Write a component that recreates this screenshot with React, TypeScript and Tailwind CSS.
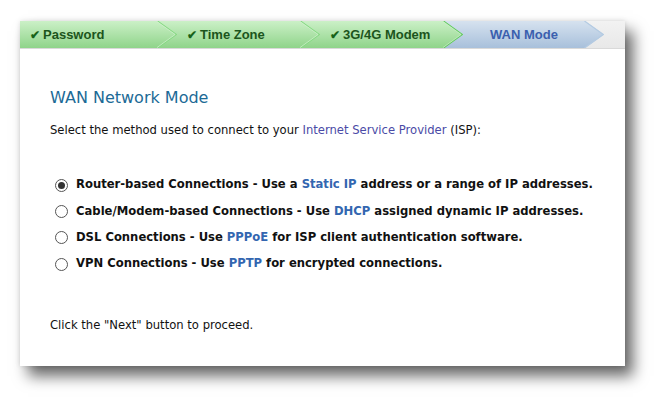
import React from 'react'

type Step = {
	label: string
	done: boolean
	width: string
	pad: string
	z: string
	line: string
}

const steps: Step[] = [
	{ label: 'Password', done: true, width: 'w-[157px]', pad: 'pl-[10px]', z: 'z-40', line: '#86d983' },
	{ label: 'Time Zone', done: true, width: 'w-[162px]', pad: 'pl-[29px]', z: 'z-30', line: '#86d983' },
	{ label: '3G/4G Modem', done: true, width: 'w-[162px]', pad: 'pl-[29px]', z: 'z-20', line: '#62c95f' },
	{ label: 'WAN Mode', done: false, width: 'w-[160px]', pad: 'pl-[19px]', z: 'z-10', line: '#b4cbe2' },
]

function StepItem({ step, first }: { step: Step; first: boolean }) {
	return (
		<div className={`relative h-[27px] shrink-0 ${step.width} ${step.z} ${first ? '' : '-ml-[19px]'}`}>
			<div
				className={`absolute inset-0 [clip-path:polygon(0_0,calc(100%-19px)_0,100%_50%,calc(100%-19px)_100%,0_100%)] ${
					step.done
						? 'bg-gradient-to-b from-[#cbf0c7] to-[#8fd48a]'
						: 'bg-gradient-to-b from-[#d6e2ef] to-[#a8c0db]'
				}`}
			/>
			<svg className="absolute right-0 top-0 h-[27px] w-[20px]" viewBox="0 0 20 27" fill="none">
				<polyline points="0.5,0 19.3,13.5 0.5,27" stroke={step.line} strokeWidth="1.2" />
				{step.done && <polyline points="-0.6,0 18.2,13.5 -0.6,27" stroke="#e6f7e4" strokeWidth="0.8" opacity="0.7" />}
			</svg>
			<div
				className={`relative flex h-full items-center font-['Liberation_Sans',Arial,sans-serif] text-[13px] font-bold ${
					step.done ? `${step.pad} text-[#1c551c]` : `justify-center ${step.pad} pr-[19px] text-[#3b5fae]`
				}`}
			>
				{step.done && <span className="mr-[3px] text-[12px] leading-none text-[#17621a]">✔</span>}
				{step.label}
			</div>
		</div>
	)
}

function Radio({ checked }: { checked?: boolean }) {
	return (
		<span className="mr-[8px] flex h-[13px] w-[13px] shrink-0 items-center justify-center rounded-full border border-[#555] bg-white">
			{checked && <span className="h-[7px] w-[7px] rounded-full bg-[#333]" />}
		</span>
	)
}

const B = ({ children }: { children: React.ReactNode }) => <span className="text-[#3366b0]">{children}</span>

export default function App() {
	const options = [
		{
			checked: true,
			body: (
				<>
					Router-based Connections - Use a <B>Static IP</B> address or a range of IP addresses.
				</>
			),
		},
		{
			body: (
				<>
					Cable/Modem-based Connections - Use <B>DHCP</B> assigned dynamic IP addresses.
				</>
			),
		},
		{
			body: (
				<>
					DSL Connections - Use <B>PPPoE</B> for ISP client authentication software.
				</>
			),
		},
		{
			body: (
				<>
					VPN Connections - Use <B>PPTP</B> for encrypted connections.
				</>
			),
		},
	]

	return (
		<div className="h-[408px] w-[668px] bg-white pl-[20px] pt-[21px]">
			<div className="h-[345px] w-[605px] bg-white shadow-[8px_10px_14px_rgba(0,0,0,0.6),0_0_5px_rgba(0,0,0,0.12)]">
				<div className="flex h-[28px] border-b border-[#d9d9d9] bg-gradient-to-b from-[#f2f2f2] to-[#e8e8e8]">
					{steps.map((s, i) => (
						<StepItem key={s.label} step={s} first={i === 0} />
					))}
				</div>
				<div className="pl-[30px] pt-[39px] font-['DejaVu_Sans',Tahoma,sans-serif] text-[11.6px] text-[#111]">
					<h1 className="text-[16px] leading-[20px] text-[#1c6a96]">WAN Network Mode</h1>
					<p className="mt-[14px] leading-[16px]">
						Select the method used to connect to your{' '}
						<span className="text-[#4a4aa6]">Internet Service Provider</span> (ISP):
					</p>
					<div className="mt-[34px] flex flex-col pl-[5px]">
						{options.map((o, i) => (
							<div key={i} className="flex h-[26.3px] items-center font-bold">
								<Radio checked={o.checked} />
								<span>{o.body}</span>
							</div>
						))}
					</div>
					<p className="mt-[40px] leading-[16px]">Click the "Next" button to proceed.</p>
				</div>
			</div>
		</div>
	)
}
